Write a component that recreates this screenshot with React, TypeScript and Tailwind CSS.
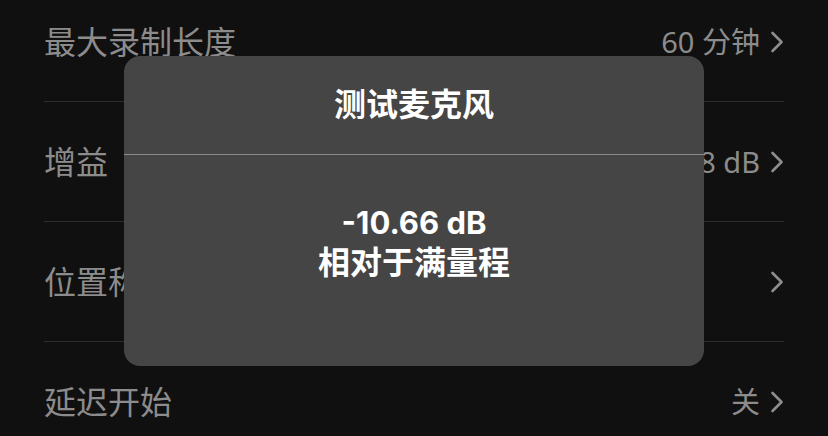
import React from 'react';

type Row = { label: string; value?: string };

const rows: Row[] = [
    { label: '最大录制长度', value: '60 分钟' },
    { label: '增益', value: '+18 dB' },
    { label: '位置称谓' },
    { label: '延迟开始', value: '关' },
];

function Chevron() {
    return (
        <svg width="14" height="22" viewBox="0 0 14 22" fill="none" className="shrink-0">
            <path d="M2.5 2 L11.5 11 L2.5 20" stroke="#8d8d8d" strokeWidth="2.6" strokeLinecap="round" strokeLinejoin="round" />
        </svg>
    );
}

export default function App() {
    const font = { fontFamily: '"Noto Sans", "Noto Sans CJK SC", sans-serif' };
    const alertFont = { fontFamily: 'Inter, "Noto Sans CJK SC", sans-serif' };

    return (
        <div className="relative w-[828px] h-[436px] overflow-hidden bg-[#101010]" style={font}>
            {/* settings list, scrolled a little */}
            <div className="mt-[-18px] px-[44px]">
                {rows.map(row => (
                    <div
                        key={row.label}
                        className="flex items-center justify-between h-[120px] border-b border-[#2c2c2c]"
                    >
                        <span className="text-[32px] text-[#8c8c8c] leading-none">{row.label}</span>
                        <div className="flex items-center gap-[10px]">
                            {row.value && (
                                <span className="text-[29px] text-[#8c8c8c] leading-none">{row.value}</span>
                            )}
                            <Chevron />
                        </div>
                    </div>
                ))}
            </div>

            {/* mic test alert */}
            <div
                className="absolute left-[124px] top-[56px] w-[580px] h-[310px] rounded-[16px] bg-[#454545] flex flex-col"
                style={alertFont}
            >
                <div className="h-[99px] flex items-center justify-center border-b border-[#8a8a8a]">
                    <span className="text-[32px] font-bold text-white leading-none">测试麦克风</span>
                </div>
                <div className="flex flex-col items-center pt-[50px] gap-[4px]">
                    <span className="text-[31px] font-bold text-white leading-[36px]">-10.66 dB</span>
                    <span className="text-[32px] font-bold text-white leading-[36px]">相对于满量程</span>
                </div>
            </div>
        </div>
    );
}
